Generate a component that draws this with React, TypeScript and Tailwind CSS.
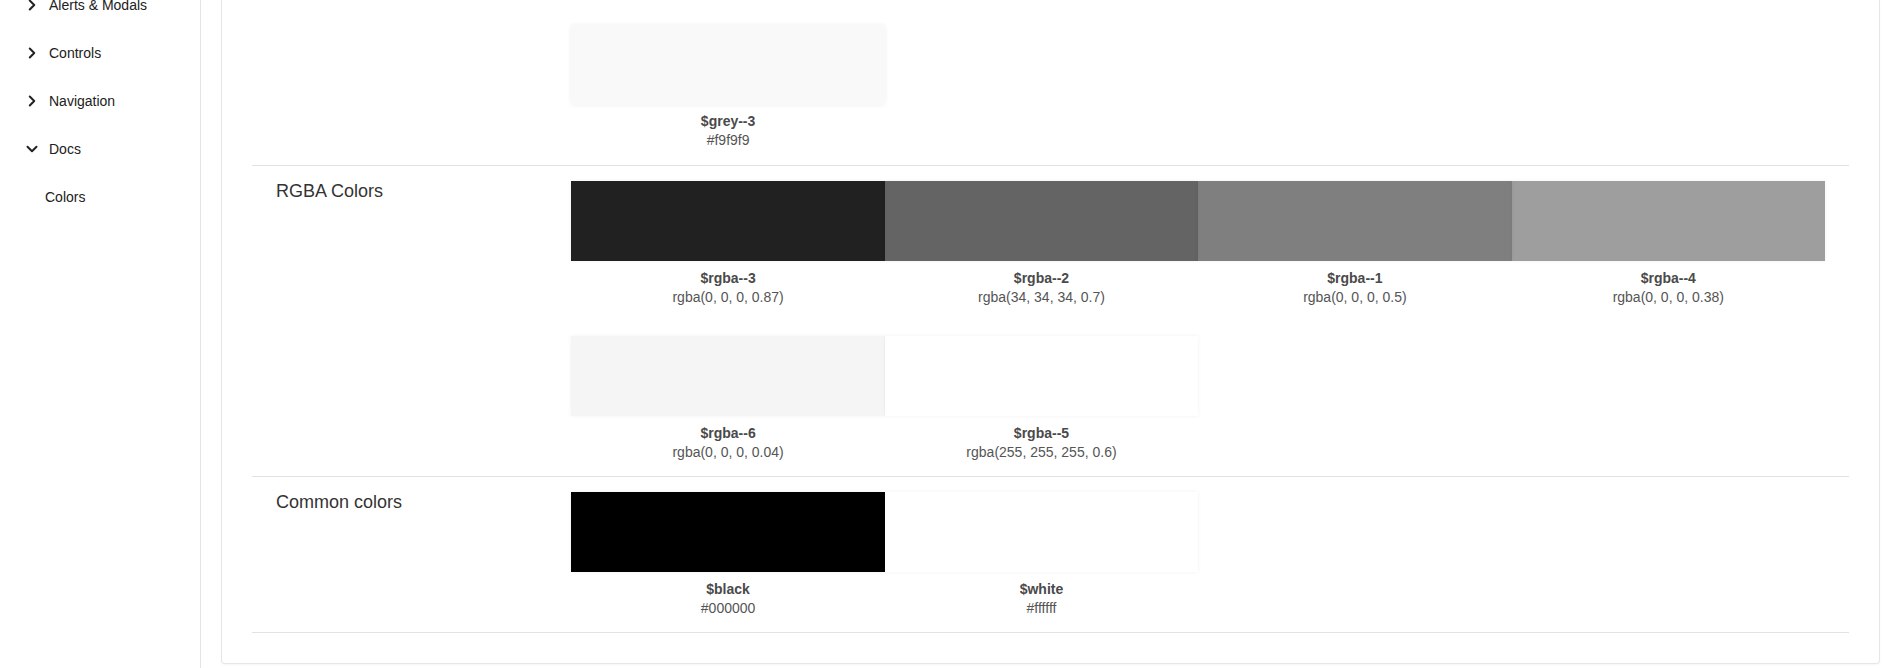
import { ChevronDown, ChevronRight } from "lucide-react";

type Swatch = { name: string; value: string; bg: string };

const navItems = [
  { label: "Alerts & Modals", open: false },
  { label: "Controls", open: false },
  { label: "Navigation", open: false },
  { label: "Docs", open: true },
];

const sections: { title: string; swatches: Swatch[] }[] = [
  {
    title: "RGBA Colors",
    swatches: [
      { name: "$rgba--3", value: "rgba(0, 0, 0, 0.87)", bg: "rgba(0, 0, 0, 0.87)" },
      { name: "$rgba--2", value: "rgba(34, 34, 34, 0.7)", bg: "rgba(34, 34, 34, 0.7)" },
      { name: "$rgba--1", value: "rgba(0, 0, 0, 0.5)", bg: "rgba(0, 0, 0, 0.5)" },
      { name: "$rgba--4", value: "rgba(0, 0, 0, 0.38)", bg: "rgba(0, 0, 0, 0.38)" },
      { name: "$rgba--6", value: "rgba(0, 0, 0, 0.04)", bg: "rgba(0, 0, 0, 0.04)" },
      { name: "$rgba--5", value: "rgba(255, 255, 255, 0.6)", bg: "rgba(255, 255, 255, 0.6)" },
    ],
  },
  {
    title: "Common colors",
    swatches: [
      { name: "$black", value: "#000000", bg: "#000000" },
      { name: "$white", value: "#ffffff", bg: "#ffffff" },
    ],
  },
];

function SwatchItem({ swatch, rounded }: { swatch: Swatch; rounded?: boolean }) {
  return (
    <div className={rounded ? "flex flex-col items-center pb-[15px]" : "flex flex-col items-center pb-[14px]"}>
      <div
        className={
          rounded
            ? "h-20 w-full rounded-[3px] shadow-[0_0_4px_rgba(0,0,0,0.07)]"
            : "h-20 w-full shadow-[0_0_4px_rgba(0,0,0,0.06)]"
        }
        style={{ backgroundColor: swatch.bg }}
      />
      <p className={rounded ? "mt-[7px] text-sm font-bold leading-[18px] text-[#4a4a4a]" : "mt-2 text-sm font-bold leading-[18px] text-[#4a4a4a]"}>
        {swatch.name}
      </p>
      <p className="text-sm leading-5 text-[#555]">{swatch.value}</p>
    </div>
  );
}

function ColorSection({ title, swatches }: { title: string; swatches: Swatch[] }) {
  return (
    <div className="flex border-b border-[#e2e2e2] pt-[15px]">
      <div className="w-1/5 pl-6 text-lg leading-5 text-[#333]">{title}</div>
      <div className="grid w-4/5 grid-cols-4 gap-y-[15px] pr-6">
        {swatches.map((s) => (
          <SwatchItem key={s.name} swatch={s} />
        ))}
      </div>
    </div>
  );
}

export default function App() {
  return (
    <div className="flex h-[668px] overflow-hidden bg-white font-['Liberation_Sans',Arial,sans-serif]">
      <aside className="w-[201px] shrink-0 border-r border-[#e4e4e4]">
        <ul className="-mt-[19px]">
          {navItems.map((item) => (
            <li key={item.label} className="flex h-12 items-center pl-[23px] text-sm text-[#212121]">
              {item.open ? (
                <ChevronDown size={18} strokeWidth={2.6} className="mr-[8px]" />
              ) : (
                <ChevronRight size={18} strokeWidth={2.6} className="mr-[8px]" />
              )}
              {item.label}
            </li>
          ))}
          <li className="flex h-12 items-center pl-[45px] text-sm text-[#212121]">Colors</li>
        </ul>
      </aside>

      <main className="flex-1 pl-5 pr-[17px]">
        <div className="rounded-b border-x border-b border-[#e6e6e6] px-[30px] pb-[30px] shadow-[0_1px_2px_rgba(0,0,0,0.04)]">
          <div className="flex border-b border-[#e2e2e2] pt-[25px]">
            <div className="w-1/5" />
            <div className="grid w-4/5 grid-cols-4 pr-6">
              <SwatchItem rounded swatch={{ name: "$grey--3", value: "#f9f9f9", bg: "#f9f9f9" }} />
            </div>
          </div>
          {sections.map((sec) => (
            <ColorSection key={sec.title} title={sec.title} swatches={sec.swatches} />
          ))}
        </div>
      </main>
    </div>
  );
}
